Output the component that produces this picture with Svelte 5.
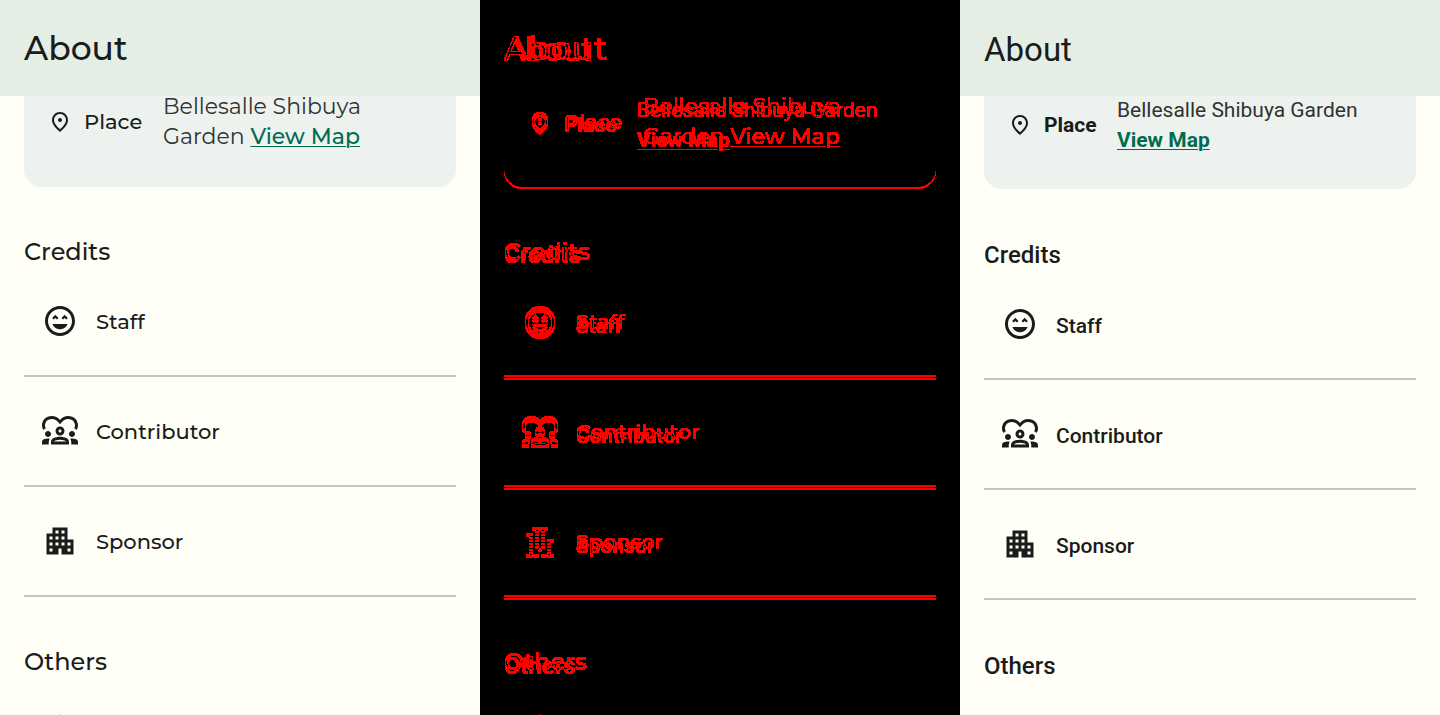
<script>
  const icons = {
    staff:
      'M11.99 2C6.47 2 2 6.48 2 12s4.47 10 9.99 10C17.52 22 22 17.52 22 12S17.52 2 11.99 2zM12 20c-4.42 0-8-3.58-8-8s3.58-8 8-8 8 3.58 8 8-3.58 8-8 8zM13 9.94L14.06 11l1.06-1.06L16.18 11l1.06-1.06-2.12-2.12zM8.88 9.94L9.94 11 11 9.94 8.88 7.82 6.76 9.94 7.82 11zM12 17.5c2.33 0 4.31-1.46 5.11-3.5H6.89c.8 2.04 2.78 3.5 5.11 3.5z',
    contributor:
      'M4 16c1.1 0 2-.9 2-2s-.9-2-2-2-2 .9-2 2 .9 2 2 2zM1.22 17.58C.48 17.9 0 18.62 0 19.43V21h4.5v-1.61c0-.83.23-1.61.63-2.29-.37-.06-.74-.1-1.13-.1-.99 0-1.93.21-2.78.58zM20 16c1.1 0 2-.9 2-2s-.9-2-2-2-2 .9-2 2 .9 2 2 2zM22.78 17.58c.74.32 1.22 1.04 1.22 1.85V21h-4.5v-1.61c0-.83-.23-1.61-.63-2.29.37-.06.74-.1 1.13-.1.99 0 1.93.21 2.78.58zM16.24 16.65c-1.17-.52-2.61-.9-4.24-.9s-3.07.39-4.24.9C6.68 17.13 6 18.21 6 19.39V21h12v-1.61c0-1.18-.68-2.26-1.76-2.74zM8.07 19c.09-.23.13-.39.91-.69.97-.38 1.99-.56 3.02-.56s2.05.18 3.02.56c.77.3.81.46.91.69H8.07zM12 9c-1.66 0-3 1.34-3 3s1.34 3 3 3 3-1.34 3-3-1.34-3-3-3zm0 4c-.55 0-1-.45-1-1s.45-1 1-1 1 .45 1 1-.45 1-1 1zM.9 11.3C.3 10.2 0 9.4 0 8.3 0 4.7 2.7 2 6.6 2c2.1 0 4.1 1 5.4 2.6C13.3 3 15.3 2 17.4 2 21.3 2 24 4.7 24 8.3c0 1.1-.3 1.9-.9 3-.4-.5-1-.9-1.700-1.100.4-.6.6-1.200.6-1.900C22 5.900 20.100 4 17.400 4c-1.900 0-3.700 1.100-5.400 3.500C10.300 5.100 8.500 4 6.600 4 3.900 4 2 5.900 2 8.300c0 .7.2 1.300.6 1.900-.7.200-1.300.600-1.700 1.100z',
    sponsor:
      'M17 11V3H7v4H3v14h8v-4h2v4h8V11h-4zM7 19H5v-2h2v2zm0-4H5v-2h2v2zm0-4H5V9h2v2zm4 4H9v-2h2v2zm0-4H9V9h2v2zm0-4H9V5h2v2zm4 8h-2v-2h2v2zm0-4h-2V9h2v2zm0-4h-2V5h2v2zm4 12h-2v-2h2v2zm0-4h-2v-2h2v2z',
    place:
      'M12 12c1.1 0 2-.9 2-2s-.9-2-2-2-2 .9-2 2 .9 2 2 2zm6-1.8C18 6.57 15.35 4 12 4s-6 2.57-6 6.2c0 2.34 1.95 5.44 6 9.14 4.05-3.7 6-6.8 6-9.14zM12 2c4.2 0 8 3.22 8 8.2 0 3.32-2.67 7.25-8 11.8-5.33-4.55-8-8.48-8-11.8C4 5.22 7.8 2 12 2z',
    gavel:
      'M1 21h12v2H1zM5.245 8.07l2.83-2.827 14.14 14.142-2.828 2.828zM12.317 1l5.657 5.656-2.83 2.83-5.654-5.66zM3.825 9.485l5.657 5.657-2.828 2.828-5.657-5.657z'
  };
  const credits = [
    { name: 'Staff', icon: icons.staff },
    { name: 'Contributor', icon: icons.contributor },
    { name: 'Sponsor', icon: icons.sponsor }
  ];
</script>

{#snippet glyph(d, small)}
  <svg class="icon" class:small viewBox="0 0 24 24" aria-hidden="true"><path {d} fill-rule="evenodd" /></svg>
{/snippet}

{#snippet screen(theme)}
  <section class="screen {theme}">
    <header><h1>About</h1></header>
    <div class="content">
      <div class="card">
        {@render glyph(icons.place, true)}
        <span class="label">Place</span>
        <p>
          {#if theme === 'before'}
            Bellesalle Shibuya<br />Garden <a href="#map">View Map</a>
          {:else}
            Bellesalle Shibuya Garden<br /><a href="#map">View Map</a>
          {/if}
        </p>
      </div>
      <h2>Credits</h2>
      <ul>
        {#each credits as item}
          <li>{@render glyph(item.icon, false)}<span>{item.name}</span></li>
        {/each}
      </ul>
      <h2>Others</h2>
      <ul>
        <li>{@render glyph(icons.gavel, false)}</li>
      </ul>
    </div>
  </section>
{/snippet}

<svg class="defs" width="0" height="0" aria-hidden="true">
  <filter id="changed" color-interpolation-filters="sRGB" x="0" y="0" width="100%" height="100%">
    <feColorMatrix values="30 30 30 0 -0.4  0 0 0 0 0  0 0 0 0 0  0 0 0 0 1" />
  </filter>
</svg>

<main>
  {@render screen('before')}
  <div class="diff" aria-hidden="true">
    {@render screen('before')}
    {@render screen('after')}
  </div>
  {@render screen('after')}
</main>

<style>
  :global(body) {
    margin: 0;
    background: #fffff8;
  }
  .defs {
    position: absolute;
  }
  main {
    display: grid;
    grid-template-columns: repeat(3, minmax(0, 1fr));
    height: 100vh;
    overflow: hidden;
  }
  .screen {
    --card-shift: -24px;
    --card-top: 20px;
    --card-bottom: 35px;
    --label-width: 79px;
    --heading-space: 50px;
    --heading-line: 30px;
    --body-size: 22px;
    --title-weight: 500;
    --title-line: 96px;
    --strong: 500;
    --text-drop: 2px;
    isolation: isolate;
    min-width: 0;
    height: 100vh;
    overflow: hidden;
    background: #fffff8;
    color: #191c1a;
    font-family: Montserrat, Inter, sans-serif;
    font-size: 21px;
    line-height: 30px;
  }
  .screen.after {
    --card-shift: -22px;
    --card-top: 21px;
    --card-bottom: 34px;
    --label-width: 73px;
    --heading-space: 52px;
    --heading-line: 29px;
    --body-size: 21px;
    --title-weight: 400;
    --title-line: 100px;
    --strong: 700;
    --text-drop: 4px;
    font-family: Roboto, sans-serif;
  }
  .diff {
    display: grid;
    isolation: isolate;
    filter: url(#changed);
    overflow: hidden;
  }
  .diff > .screen {
    grid-area: 1 / 1;
  }
  .diff > .screen.after {
    mix-blend-mode: difference;
  }
  header {
    position: relative;
    z-index: 1;
    height: 96px;
    padding: 0 24px;
    background: #e4eee5;
  }
  h1,
  h2,
  p,
  ul {
    margin: 0;
    padding: 0;
  }
  h1 {
    font-size: 33px;
    line-height: var(--title-line);
    font-weight: var(--title-weight);
  }
  .content {
    padding: 0 24px;
  }
  .card {
    display: flex;
    align-items: center;
    margin-top: var(--card-shift);
    padding: var(--card-top) 24px var(--card-bottom);
    border-radius: 0 0 18px 18px;
    background: #edf2ef;
  }
  .label {
    width: var(--label-width);
    margin-left: 12px;
    flex: none;
    font-weight: var(--strong);
  }
  p {
    color: #303331;
    font-size: var(--body-size);
    white-space: nowrap;
  }
  a {
    color: #006c4f;
    font-weight: var(--strong);
    text-underline-offset: 2px;
    text-decoration-thickness: 1px;
  }
  h2 {
    padding-top: var(--heading-space);
    font-size: 24px;
    line-height: var(--heading-line);
    font-weight: 500;
  }
  ul {
    list-style: none;
  }
  li {
    display: flex;
    align-items: center;
    gap: 18px;
    height: 108px;
    padding-left: 18px;
    border-bottom: 2px solid #bec9c3;
    font-weight: 500;
  }
  li span {
    padding-top: var(--text-drop);
  }
  .icon {
    flex: none;
    width: 36px;
    height: 36px;
    fill: currentColor;
  }
  .icon.small {
    width: 24px;
    height: 24px;
  }
</style>
